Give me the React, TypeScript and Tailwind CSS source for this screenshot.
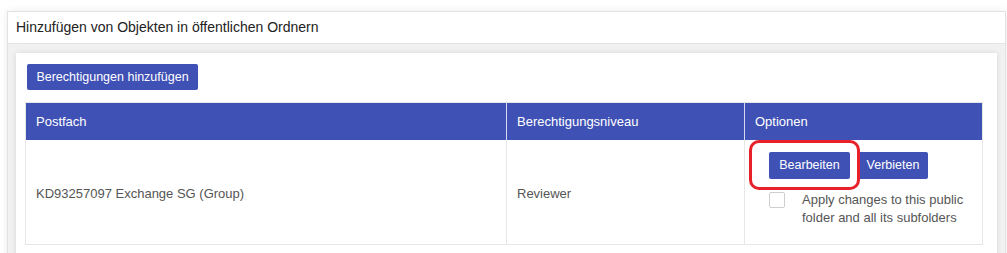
export default function App() {
  return (
    <div className="w-[1007px] h-[253px] overflow-hidden bg-white pt-[11px] pl-[7px] font-['Liberation_Sans',Arial,sans-serif]">
      <div className="w-[999px] border border-[#e2e2e2] shadow-[0_0_8px_rgba(0,0,0,0.08)] bg-white">
        <div className="h-[32px] flex items-center px-[8px] text-[14px] text-[#222] border-b border-[#e4e4e4]">
          Hinzufügen von Objekten in öffentlichen Ordnern
        </div>
        <div className="bg-[#f1f1f1] pt-[9px] pl-[8px] pr-[8px] h-[220px]">
          <div className="bg-white shadow-[0_0_6px_rgba(0,0,0,0.1)] pt-[11px] pl-[9px] pr-[14px] h-[260px]">
            <button className="ml-[2px] h-[26px] w-[171px] rounded-[2px] bg-[#3f51b5] text-white text-[12.5px]">
              Berechtigungen hinzufügen
            </button>

            <table className="mt-[12px] w-[958px] table-fixed border-collapse border border-[#e6e6e6] text-[13px]">
              <thead>
                <tr className="h-[37px] bg-[#3f51b5] text-white text-left">
                  <th className="w-[481px] px-[10px] font-normal">Postfach</th>
                  <th className="w-[238px] px-[10px] font-normal border-l border-[#d6d9ee]">
                    Berechtigungsniveau
                  </th>
                  <th className="px-[10px] font-normal border-l border-[#d6d9ee]">Optionen</th>
                </tr>
              </thead>
              <tbody>
                <tr className="h-[105px] text-[#555]">
                  <td className="px-[10px] pt-[3px]">KD93257097 Exchange SG (Group)</td>
                  <td className="px-[10px] pt-[3px] border-l border-[#e6e6e6]">Reviewer</td>
                  <td className="relative border-l border-[#e6e6e6] pl-[24px] pr-[6px] align-top pt-[12px]">
                    <div className="flex gap-[8px]">
                      <button className="h-[27px] w-[81px] rounded-[2px] bg-[#3f51b5] text-white text-[12.5px]">
                        Bearbeiten
                      </button>
                      <button className="h-[27px] w-[70px] rounded-[2px] bg-[#3f51b5] text-white text-[12.5px]">
                        Verbieten
                      </button>
                    </div>
                    <div className="flex mt-[12px]">
                      <span className="mt-[1px] w-[16px] h-[16px] shrink-0 border border-[#cfcfcf] rounded-[2px] bg-white" />
                      <span className="ml-[17px] leading-[18px] w-[176px]">
                        Apply changes to this public folder and all its subfolders
                      </span>
                    </div>
                    <div className="absolute left-[4px] top-[0px] w-[111px] h-[50px] border-[3px] border-[#e8202a] rounded-[10px]" />
                  </td>
                </tr>
              </tbody>
            </table>
          </div>
        </div>
      </div>
    </div>
  );
}
